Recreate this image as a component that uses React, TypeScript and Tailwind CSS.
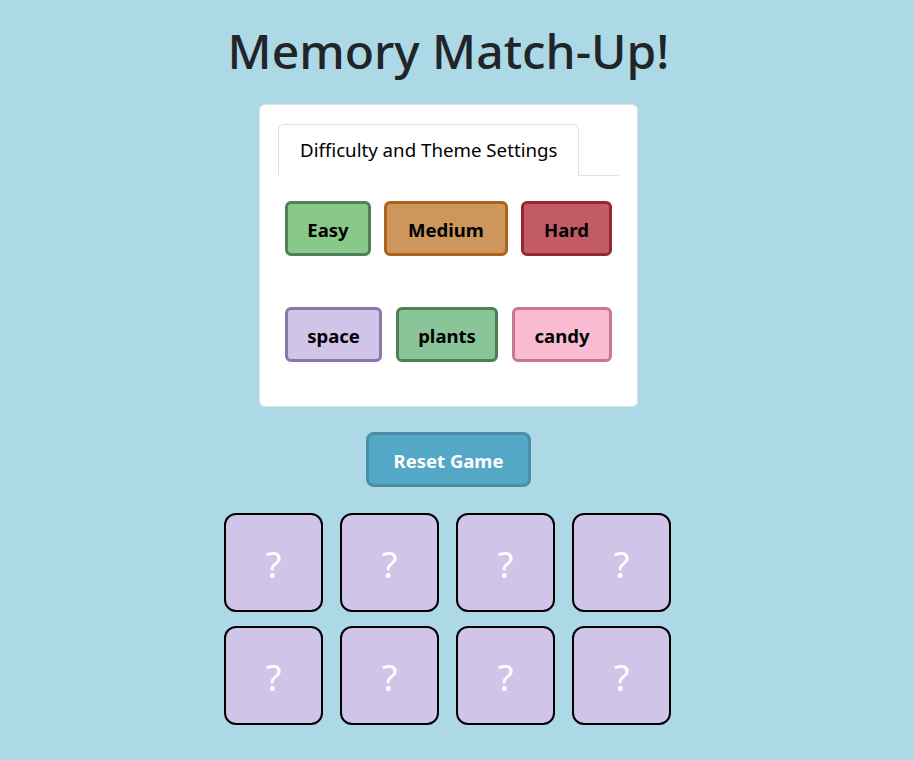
import { useState } from "react";

const difficulties = [
  { label: "Easy", cls: "w-[86px] bg-[#88c98a] border-[#4f7f55]" },
  { label: "Medium", cls: "w-[124px] bg-[#cd965a] border-[#a8631f]" },
  { label: "Hard", cls: "w-[91px] bg-[#c35c64] border-[#922a2f]" },
];

const themes = [
  { label: "space", cls: "w-[97px] bg-[#d1c4e9] border-[#8a78a8]" },
  { label: "plants", cls: "w-[102px] bg-[#8ac499] border-[#4f7f55]" },
  { label: "candy", cls: "w-[100px] bg-[#f8bbd0] border-[#c7788f]" },
];

export default function App() {
  const [cards] = useState(Array.from({ length: 8 }, (_, i) => i));

  return (
    <div
      className="min-h-screen bg-[#add8e6] text-[#212529]"
      style={{ fontFamily: '"Noto Sans", "Open Sans", sans-serif' }}
    >
      <div className="w-[897px] flex flex-col items-center pt-[22px] pb-8">
        <h1 className="text-[48px] font-medium leading-[1.2] mb-[24px]">Memory Match-Up!</h1>

        <div className="w-[379px] bg-white rounded-[6px] border border-[#dee2e6] px-[18px] pt-[19px] pb-[44px]">
          <div className="flex border-b border-[#dee2e6]">
            <div className="h-[52px] px-[21px] flex items-center border border-[#dee2e6] border-b-white -mb-px rounded-t-[6px] text-[18.7px] text-black">
              Difficulty and Theme Settings
            </div>
          </div>

          <div className="px-[7px] pt-[25px]">
            <div className="flex gap-[13px]">
              {difficulties.map((d) => (
                <button
                  key={d.label}
                  type="button"
                  className={`h-[55px] pt-[3px] rounded-[6px] border-[3px] text-[18.5px] font-bold text-black ${d.cls}`}
                >
                  {d.label}
                </button>
              ))}
            </div>
            <div className="flex gap-[14px] mt-[51px]">
              {themes.map((t) => (
                <button
                  key={t.label}
                  type="button"
                  className={`h-[55px] pt-[3px] rounded-[6px] border-[3px] text-[18.5px] font-bold text-black ${t.cls}`}
                >
                  {t.label}
                </button>
              ))}
            </div>
          </div>
        </div>

        <button
          type="button"
          className="mt-[25px] h-[55px] w-[165px] pt-[3px] rounded-[8px] border-[3px] border-[#4b8da6] bg-[#53a8c6] text-white text-[18.5px] font-bold"
        >
          Reset Game
        </button>

        <div className="mt-[26px] mr-[2px] grid grid-cols-[repeat(4,99px)] gap-x-[17px] gap-y-[14px]">
          {cards.map((c) => (
            <div
              key={c}
              className="h-[99px] pt-[5px] rounded-[12px] border-2 border-black bg-[#d1c4e9] flex items-center justify-center text-white text-[36px]"
            >
              ?
            </div>
          ))}
        </div>
      </div>
    </div>
  );
}
